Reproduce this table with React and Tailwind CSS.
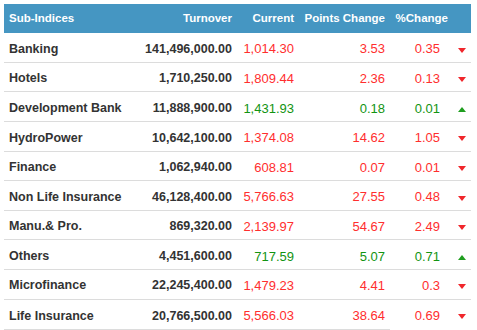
import React from 'react';

const rows = [
  { name: 'Banking', turnover: '141,496,000.00', current: '1,014.30', points: '3.53', pct: '0.35', up: false },
  { name: 'Hotels', turnover: '1,710,250.00', current: '1,809.44', points: '2.36', pct: '0.13', up: false },
  { name: 'Development Bank', turnover: '11,888,900.00', current: '1,431.93', points: '0.18', pct: '0.01', up: true },
  { name: 'HydroPower', turnover: '10,642,100.00', current: '1,374.08', points: '14.62', pct: '1.05', up: false },
  { name: 'Finance', turnover: '1,062,940.00', current: '608.81', points: '0.07', pct: '0.01', up: false },
  { name: 'Non Life Insurance', turnover: '46,128,400.00', current: '5,766.63', points: '27.55', pct: '0.48', up: false },
  { name: 'Manu.& Pro.', turnover: '869,320.00', current: '2,139.97', points: '54.67', pct: '2.49', up: false },
  { name: 'Others', turnover: '4,451,600.00', current: '717.59', points: '5.07', pct: '0.71', up: true },
  { name: 'Microfinance', turnover: '22,245,400.00', current: '1,479.23', points: '4.41', pct: '0.3', up: false },
  { name: 'Life Insurance', turnover: '20,766,500.00', current: '5,566.03', points: '38.64', pct: '0.69', up: false },
];

function Arrow({ up }) {
  return up ? (
    <svg width="8" height="5" viewBox="0 0 8 5" className="mt-[2px]">
      <polygon points="0,5 8,5 4,0" fill="#1f9e1f" />
    </svg>
  ) : (
    <svg width="8" height="5" viewBox="0 0 8 5" className="mt-[2px]">
      <polygon points="0,0 8,0 4,5" fill="#f0262b" />
    </svg>
  );
}

export default function App() {
  return (
    <div className="w-[477px] h-[330px] bg-white overflow-hidden pt-[4px] pl-[4px]" style={{ fontFamily: '"Liberation Sans", Arial, sans-serif' }}>
      <div className="w-[467px]">
        {/* Header */}
        <div className="grid grid-cols-[136px_96px_62px_91px_63px_1fr] h-[29.3px] items-center bg-[#4596c2] text-white font-bold text-[11.5px]">
          <div className="pl-[5px]">Sub-Indices</div>
          <div className="text-right pr-[4px]">Turnover</div>
          <div className="text-right pr-[4px]">Current</div>
          <div className="text-right pr-[4px]">Points Change</div>
          <div className="text-right pr-[4px]">%Change</div>
          <div />
        </div>

        {/* Rows */}
        {rows.map((r, i) => {
          const color = r.up ? 'text-[#129412]' : 'text-[#ff2e2e]';
          return (
            <div
              key={r.name}
              className={`grid grid-cols-[136px_96px_62px_91px_55px_1fr] h-[29.6px] pt-[3px] items-center ${i < rows.length - 1 ? 'border-b border-[#dcdcdc]' : ''}`}
            >
              <div className="pl-[5px] text-[12.5px] font-bold text-[#333] whitespace-nowrap">{r.name}</div>
              <div className="text-right pr-[4px] text-[12.5px] font-bold text-[#333]">{r.turnover}</div>
              <div className={`text-right pr-[4px] text-[13px] ${color}`}>{r.current}</div>
              <div className={`text-right pr-[4px] text-[13px] ${color}`}>{r.points}</div>
              <div className={`text-right pr-[4px] text-[13px] ${color}`}>{r.pct}</div>
              <div className="flex pl-[14px]">
                <Arrow up={r.up} />
              </div>
            </div>
          );
        })}
        <div className="w-[386px] h-px bg-[#dcdcdc]" />
      </div>
    </div>
  );
}
